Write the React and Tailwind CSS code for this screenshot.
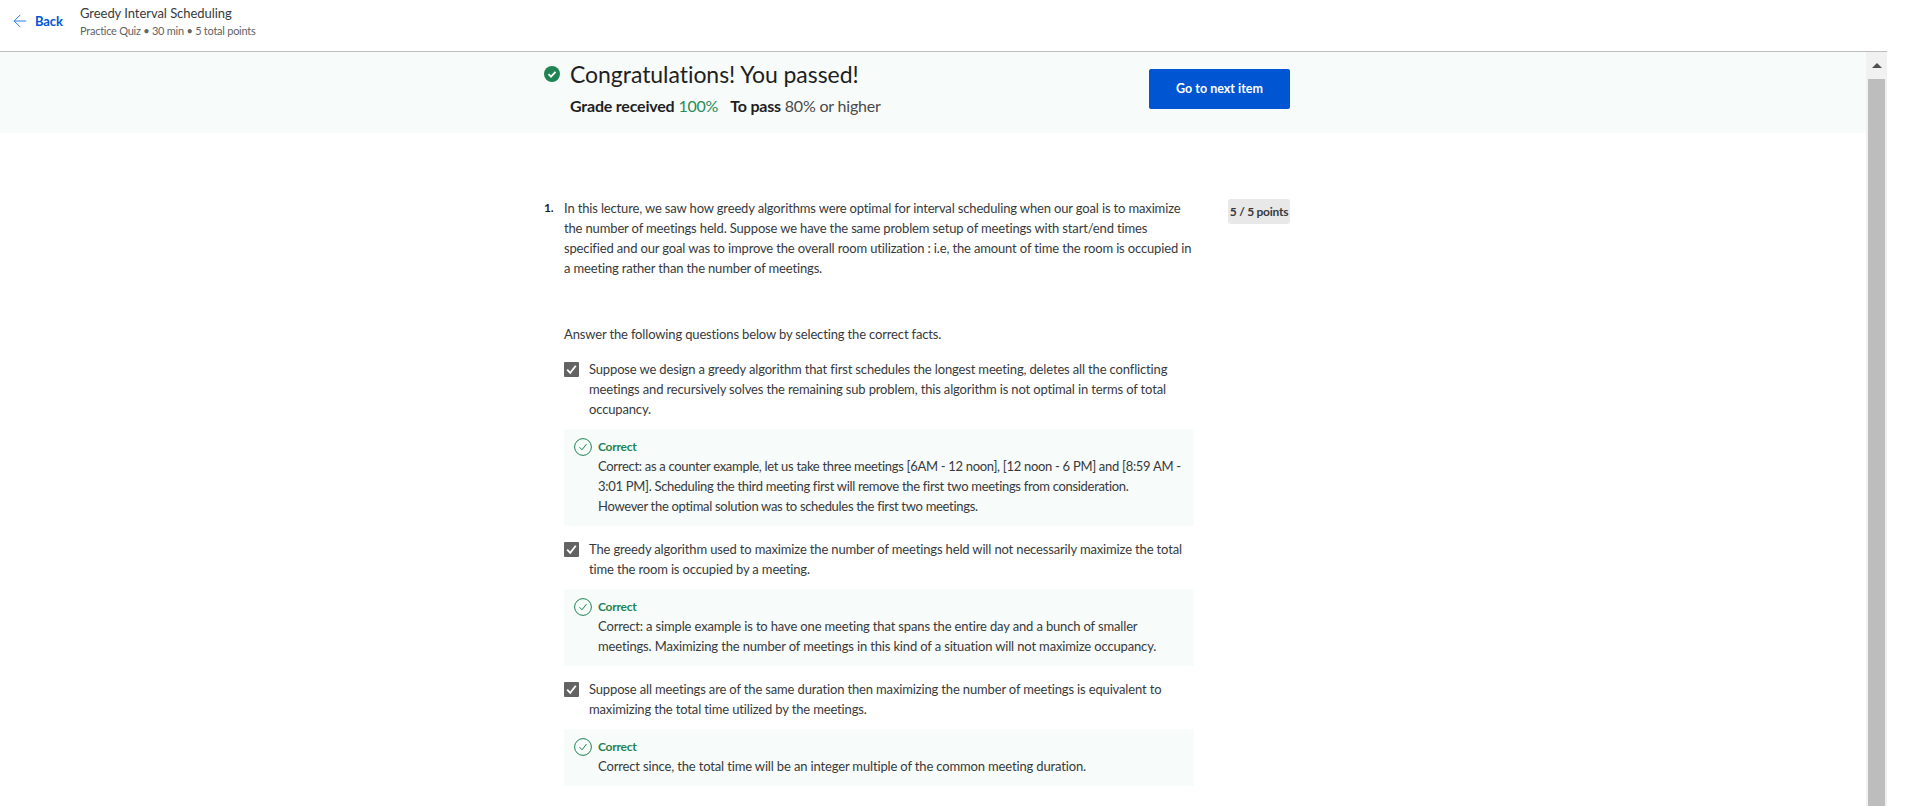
import { ArrowLeft } from "lucide-react";

const FONT = "font-['Lato','Noto_Sans',sans-serif]";

const ANSWERS = [
  {
    text: "Suppose we design a greedy algorithm that first schedules the longest meeting, deletes all the conflicting meetings and recursively solves the remaining sub problem, this algorithm is not optimal in terms of total occupancy.",
    feedback: "Correct: as a counter example, let us take three meetings [6AM - 12 noon], [12 noon - 6 PM] and [8:59 AM - 3:01 PM]. Scheduling the third meeting first will remove the first two meetings from consideration.\nHowever the optimal solution was to schedules the first two meetings.",
    // needs tighter spacing to keep "[8:59 AM -" on the first line
    feedbackClass: "tracking-[-0.3px] whitespace-pre-line",
    boxClass: "pr-[6px]",
  },
  {
    text: "The greedy algorithm used to maximize the number of meetings held will not necessarily maximize the total time the room is occupied by a meeting.",
    feedback: "Correct: a simple example is to have one meeting that spans the entire day and a bunch of smaller meetings. Maximizing the number of meetings in this kind of a situation will not maximize occupancy.",
    feedbackClass: "",
    boxClass: "pr-[14px]",
  },
  {
    text: "Suppose all meetings are of the same duration then maximizing the number of meetings is equivalent to maximizing the total time utilized by the meetings.",
    feedback: "Correct since, the total time will be an integer multiple of the common meeting duration.",
    feedbackClass: "",
    boxClass: "pr-[14px]",
  },
];

function PassedIcon() {
  return (
    <svg width="16" height="16" viewBox="0 0 16 16" className="shrink-0">
      <circle cx="8" cy="8" r="8" fill="#1f8354" />
      <path d="M4.5 8.2 7 10.6 11.5 5.8" fill="none" stroke="#fff" strokeWidth="1.8" />
    </svg>
  );
}

function CorrectIcon() {
  return (
    <svg width="18" height="18" viewBox="0 0 18 18" className="shrink-0">
      <circle cx="9" cy="9" r="8.4" fill="none" stroke="#1f8354" strokeWidth="1" />
      <path d="M5.5 9.2 8 11.8 12.5 6" fill="none" stroke="#1f8354" strokeWidth="1" />
    </svg>
  );
}

function CheckBox() {
  return (
    <div className="w-[15px] h-[15px] mt-[3px] shrink-0 rounded-[1px] bg-[#636363] flex items-center justify-center">
      <svg width="11" height="11" viewBox="0 0 11 11">
        <path d="M1.2 5.6 4.2 8.8 9.8 1.8" fill="none" stroke="#fff" strokeWidth="1.8" />
      </svg>
    </div>
  );
}

function Answer({ text, feedback, feedbackClass, boxClass }) {
  return (
    <div>
      <div className="flex gap-[10px] pr-[8px]">
        <CheckBox />
        <p>{text}</p>
      </div>
      <div className={`mt-[10px] bg-[#f7fbf9] pl-[10px] pt-[9px] pb-[10px] ${boxClass}`}>
        <div className="flex items-center gap-[6px] h-[18px]">
          <CorrectIcon />
          <span className="text-[12px] font-bold tracking-[-0.25px] text-[#1f8354]">Correct</span>
        </div>
        <p className={`ml-[24px] ${feedbackClass}`}>{feedback}</p>
      </div>
    </div>
  );
}

export default function App() {
  return (
    <div className={`${FONT} flex w-full h-[806px] overflow-hidden bg-white text-[13px] leading-[20px] tracking-[-0.15px] text-[#373a3c]`}>
      <div className="w-[1887px] shrink-0 flex flex-col">
        <header className="h-[52px] shrink-0 flex items-start border-b border-[#bdbdbd] pt-[4px]">
          <button className="w-[80px] h-[32px] mt-[1px] pl-[10px] flex items-center gap-[6px] text-[13px] font-bold tracking-[-0.1px] text-[#0056d2]">
            <ArrowLeft size={20} strokeWidth={1.2} className="text-[#2f7bf0] -mr-[1px]" />
            Back
          </button>
          <div>
            <h1 className="text-[13px] leading-[18px] tracking-[-0.05px] text-[#373a3c]">Greedy Interval Scheduling</h1>
            <p className="text-[11px] leading-[18px] tracking-[-0.25px] text-[#636363]">Practice Quiz • 30 min • 5 total points</p>
          </div>
        </header>

        <div className="flex flex-1 min-h-0">
          <main className="flex-1 min-w-0">
            <section className="h-[81px] bg-[#f7fbf9] pl-[544px]">
              <div className="w-[746px] flex items-start">
                <div className="mt-[14px]"><PassedIcon /></div>
                <div className="ml-[10px] flex-1">
                  <h2 className="text-[23px] leading-[30px] mt-[7px] tracking-[-0.05px] text-[#1f1f1f]">Congratulations! You passed!</h2>
                  <p className="mt-[7px] text-[16px] leading-[20px] tracking-[-0.2px] text-[#1f1f1f]">
                    <span className="font-bold">Grade received</span>{" "}
                    <span className="text-[#2a8a5c]">100%</span>
                    <span className="ml-[12px] font-bold">To pass</span>{" "}
                    <span className="text-[#4a4a4a]">80% or higher</span>
                  </p>
                </div>
                <button className="w-[141px] h-[40px] mt-[17px] rounded-[2px] bg-[#0056d2] text-[12.5px] font-bold tracking-normal text-white">
                  Go to next item
                </button>
              </div>
            </section>

            <section className="pl-[544px] pt-[65px]">
              <div className="w-[746px] flex items-start">
                <span className="w-[20px] shrink-0 text-[12px] font-bold text-[#1f1f1f]">1.</span>
                <div className="w-[630px] shrink-0">
                  <p>In this lecture, we saw how greedy algorithms were optimal for interval scheduling when our goal is to maximize the number of meetings held. Suppose we have the same problem setup of meetings with start/end times specified and our goal was to improve the overall room utilization : i.e, the amount of time the room is occupied in a meeting rather than the number of meetings.</p>
                  <p className="mt-[46px]">Answer the following questions below by selecting the correct facts.</p>
                  <div className="mt-[15px] flex flex-col gap-[13px]">
                    {ANSWERS.map((a) => (
                      <Answer key={a.text} {...a} />
                    ))}
                  </div>
                </div>
                <span className="ml-auto mt-[1px] h-[25px] w-[62px] flex items-center justify-center rounded-[3px] bg-[#e8e8e8] text-[12px] font-bold tracking-[-0.25px] text-[#373a3c]">
                  5 / 5 points
                </span>
              </div>
            </section>
          </main>

          {/* scrollbar */}
          <div className="w-[21px] shrink-0 bg-[#f1f1f1] flex flex-col items-center">
            <div className="h-[27px] flex items-center justify-center">
              <div className="w-0 h-0 border-x-[5px] border-x-transparent border-b-[5px] border-b-[#505050]" />
            </div>
            <div className="w-[17px] flex-1 bg-[#bdbdbd]" />
          </div>
        </div>
      </div>
      <div className="flex-1" />
    </div>
  );
}
